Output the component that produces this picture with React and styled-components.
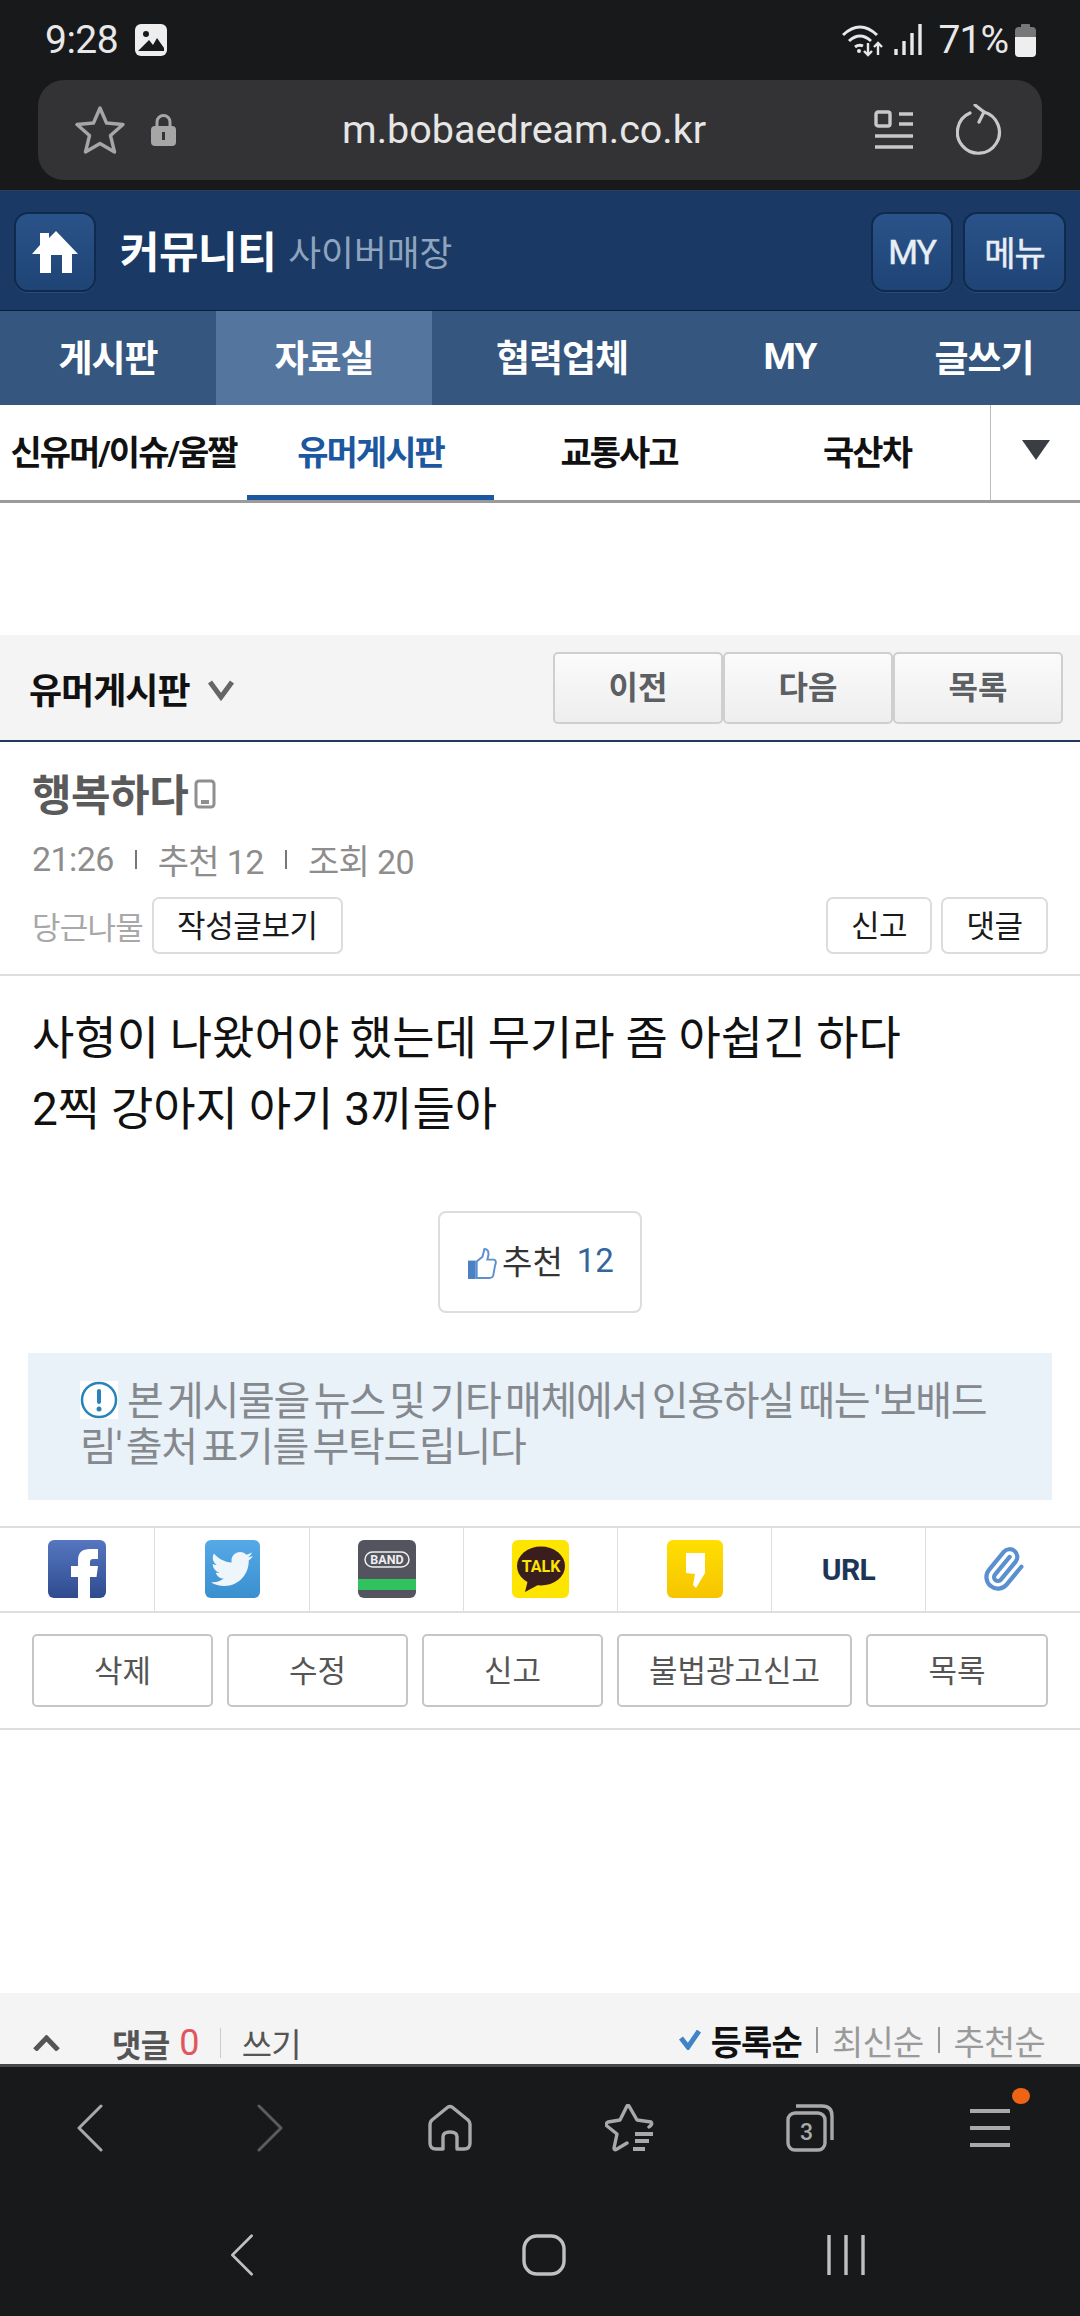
import React from 'react'
import styled, { createGlobalStyle } from 'styled-components'
import { FaTwitter } from 'react-icons/fa'
import { Paperclip } from 'lucide-react'

const FONT = `Roboto, "Noto Sans CJK KR", sans-serif`

const Global = createGlobalStyle`
  html, body { margin: 0; padding: 0; background: #fff; }
  body { font-family: ${FONT}; }
  * { box-sizing: border-box; }
`

const Page = styled.div`
  width: 1080px;
  height: 2316px;
  overflow: hidden;
  display: flex;
  flex-direction: column;
  background: #fff;
`

/* browser chrome */
const StatusBar = styled.div`
  height: 80px;
  background: #18191b;
  display: flex;
  align-items: center;
  padding: 0 44px 0 45px;
  color: #e8e8e8;
  font-size: 39px;
`
const StatusText = styled.span`
  letter-spacing: ${p => p.$ls || 0}px;
  margin-left: ${p => p.$ml || 0}px;
`
const Spacer = styled.div`
  flex: 1;
`
const UrlWrap = styled.div`
  height: 110px;
  background: #18191b;
  padding: 0 38px 10px;
`
const UrlBar = styled.div`
  height: 100px;
  border-radius: 26px;
  background: #333335;
  display: flex;
  align-items: center;
  padding: 0 40px 0 37px;
  position: relative;
`
const UrlText = styled.div`
  position: absolute;
  left: 304px;
  top: 28px;
  font-size: 39.5px;
  line-height: 44px;
  color: #e6e6e6;
`

/* site header */
const Header = styled.div`
  height: 120px;
  background: #1a3a65;
  border-top: 1px solid #2c3f58;
  display: flex;
  align-items: center;
  padding: 2px 14px 0;
`
const HeadBtn = styled.div`
  width: ${p => p.$w}px;
  height: 80px;
  margin-left: ${p => p.$ml || 0}px;
  border-radius: 14px;
  background: linear-gradient(#2a5389, #1f4476);
  border: 2px solid #102a4e;
  box-shadow: 0 1px 0 #2b4a75;
  display: flex;
  align-items: center;
  justify-content: center;
  color: #e9eef5;
  font-size: 34px;
  letter-spacing: -1px;
  -webkit-text-stroke: 0.5px #e9eef5;
`
const SiteTitle = styled.span`
  font-size: 43px;
  font-weight: 700;
  color: #fff;
  margin-left: 24px;
  margin-bottom: 6px;
  letter-spacing: -0.5px;
`
const SiteSub = styled.span`
  font-size: 35.7px;
  color: #8fa4bd;
  margin-left: 12px;
  margin-bottom: 3px;
`
const Nav = styled.div`
  height: 95px;
  border-top: 1px solid #0c1f3a;
  background: #35567f;
  display: grid;
  grid-template-columns: 216px 216px 260px 196px 192px;
`
const NavItem = styled.div`
  display: flex;
  align-items: center;
  justify-content: center;
  color: #fff;
  font-size: 37px;
  font-weight: 700;
  letter-spacing: -1px;
  padding-bottom: 4px;
  background: ${p => (p.$active ? '#54769e' : 'transparent')};
`
const SubNav = styled.div`
  height: 98px;
  border-bottom: 3px solid #9b9b9b;
  background: #fff;
  display: grid;
  grid-template-columns: 247px 247px 250px 246px 90px;
`
const SubItem = styled.div`
  display: flex;
  align-items: center;
  justify-content: center;
  font-size: 34px;
  font-weight: 700;
  letter-spacing: -2px;
  color: ${p => (p.$active ? '#1c58a0' : '#111')};
  border-bottom: ${p => (p.$active ? '5px solid #1c58a0' : '5px solid transparent')};
`
const SubArrow = styled.div`
  border-left: 1px solid #bbb;
  display: flex;
  align-items: center;
  justify-content: center;
  padding-bottom: 6px;
`
const Triangle = styled.div`
  width: 0;
  height: 0;
  border-left: 14px solid transparent;
  border-right: 14px solid transparent;
  border-top: 20px solid #3a3d42;
`
const AdGap = styled.div`
  height: 132px;
`

/* board bar */
const BoardBar = styled.div`
  height: 107px;
  background: #f4f4f4;
  border-bottom: 2px solid #22385a;
  display: flex;
  align-items: center;
  padding: 0 17px 0 29px;
`
const BoardName = styled.span`
  font-size: 36px;
  font-weight: 700;
  color: #111;
  letter-spacing: -1px;
`
const BoardChevron = styled.svg`
  width: 28px;
  height: 22px;
  margin-left: 17px;
  margin-top: 4px;
`
const PagerBtn = styled.div`
  width: 170px;
  height: 72px;
  padding-bottom: 5px;
  border: 2px solid #cfcfcf;
  border-radius: 5px;
  background: linear-gradient(#fbfbfb, #eeeeee);
  display: flex;
  align-items: center;
  justify-content: center;
  font-size: 32px;
  font-weight: 700;
  color: #5c5f63;
`

/* post head */
const PostHead = styled.div`
  height: 234px;
  border-bottom: 2px solid #dedede;
  padding: 25px 32px 0 32px;
`
const Author = styled.div`
  display: flex;
  align-items: center;
  height: 50px;
  font-size: 43px;
  font-weight: 700;
  color: #5a5a5a;
  letter-spacing: -0.5px;
`
const Meta = styled.div`
  display: flex;
  align-items: center;
  height: 48px;
  margin-top: 18px;
  font-size: 34px;
  color: #8d8d8d;
  letter-spacing: -0.6px;
`
const MetaSep = styled.span`
  width: 2px;
  height: 19px;
  background: #777;
  margin: 0 21px;
`
const ActionRow = styled.div`
  display: flex;
  align-items: center;
  margin-top: 14px;
`
const Nick = styled.span`
  font-size: 31px;
  color: #a8a8a8;
  letter-spacing: -0.8px;
  margin-right: 9px;
`
const SmallBtn = styled.div`
  width: ${p => p.$w}px;
  height: 57px;
  margin-left: ${p => p.$ml || 0}px;
  padding-bottom: 4px;
  border: 2px solid #dcdcdc;
  border-radius: 7px;
  display: flex;
  align-items: center;
  justify-content: center;
  font-size: 31px;
  color: #1a1a1a;
  letter-spacing: -0.4px;
`

/* post body */
const Body = styled.div`
  padding: 27px 32px 0;
  height: 235px;
  font-size: 46px;
  line-height: 71px;
  word-spacing: -0.6px;
  color: #111;
`
const LikeRow = styled.div`
  display: flex;
  justify-content: center;
`
const LikeBtn = styled.div`
  width: 204px;
  height: 102px;
  margin-right: 1px;
  border: 2px solid #dddddd;
  border-radius: 8px;
  display: flex;
  align-items: center;
  justify-content: center;
  font-size: 33px;
  color: #333;
  padding-bottom: 4px;
`
const LikeCount = styled.span`
  color: #33659f;
  margin-left: 14px;
`
const Notice = styled.div`
  margin: 40px 28px 0;
  height: 147px;
  padding: 26px 50px 0 52px;
  background: #e9f1f9;
  font-size: 40px;
  line-height: 46px;
  color: #85898e;
  letter-spacing: -1.3px;
  word-spacing: -4px;
  word-break: break-all;
`
const NoticeIcon = styled.svg`
  width: 38px;
  height: 38px;
  vertical-align: -4px;
  margin-right: 9px;
`

/* share row */
const ShareRow = styled.div`
  margin-top: 26px;
  height: 87px;
  border-top: 2px solid #dedede;
  border-bottom: 2px solid #dedede;
  display: grid;
  grid-template-columns: 155px 155px 154px 154px 154px 154px 154px;
`
const ShareCell = styled.div`
  display: flex;
  align-items: center;
  justify-content: center;
  border-right: ${p => (p.$last ? 'none' : '1px solid #dedede')};
  padding-bottom: 1px;
`
const ShareIcon = styled.div`
  width: ${p => p.$w || 58}px;
  height: 58px;
  border-radius: 6px;
  display: flex;
  align-items: center;
  justify-content: center;
  overflow: hidden;
  background: ${p => p.$bg};
  color: #fff;
`
const UrlLabel = styled.span`
  font-size: 30px;
  font-weight: 700;
  color: #1d3557;
  letter-spacing: -0.5px;
`
const ManageRow = styled.div`
  height: 117px;
  border-bottom: 2px solid #dedede;
  padding: 21px 32px 0;
  display: flex;
  justify-content: space-between;
`
const ManageBtn = styled.div`
  width: ${p => p.$w}px;
  height: 73px;
  padding-bottom: 5px;
  border: 2px solid #c6c6c6;
  border-radius: 5px;
  display: flex;
  align-items: center;
  justify-content: center;
  font-size: 31px;
  color: #555;
`
const BlankGap = styled.div`
  height: 263px;
`

/* comment bar, cut off by the browser toolbar */
const CommentBar = styled.div`
  height: 71px;
  background: #f4f4f4;
  overflow: hidden;
  display: flex;
  padding: 25px 35px 0 33px;
`
const CommentLeft = styled.div`
  display: flex;
  align-items: center;
  height: 50px;
  font-size: 33px;
  letter-spacing: -0.8px;
  color: #555;
`
const CommentLabel = styled.span`
  font-size: 32px;
  font-weight: 700;
  margin-left: 52px;
`
const CommentCount = styled.span`
  font-size: 36px;
  color: #e2555f;
  margin-left: 10px;
`
const CommentSep = styled.span`
  width: 1px;
  height: 30px;
  background: #ccc;
  margin: 0 21px;
`
const SortGroup = styled.div`
  display: flex;
  align-items: center;
  height: 44px;
  font-size: 34px;
  letter-spacing: -0.8px;
  color: #9a9a9a;
`
const SortActive = styled.span`
  font-weight: 700;
  color: #111;
  margin-left: 10px;
`
const SortSep = styled.span`
  width: 2px;
  height: 26px;
  background: #999;
  margin: 0 14px;
`

/* browser toolbar and system nav */
const BottomChrome = styled.div`
  flex: 1;
  border-top: 3px solid #47484a;
  background: #18191b;
  display: flex;
  flex-direction: column;
`
const Toolbar = styled.div`
  height: 116px;
  display: grid;
  grid-template-columns: repeat(6, 180px);
  align-items: center;
`
const ToolCell = styled.div`
  display: flex;
  justify-content: center;
  padding-top: 6px;
  position: relative;
`
const Dot = styled.span`
  position: absolute;
  width: 18px;
  height: 16px;
  border-radius: 50%;
  background: #ef6414;
  left: 112px;
  top: -14px;
`
const SysNav = styled.div`
  margin-top: 42px;
  padding-left: 91px;
  height: 60px;
  display: grid;
  grid-template-columns: repeat(3, 302px);
  align-items: center;
  justify-items: center;
`

const HomeGlyph = () => (
  <svg width="46" height="42" viewBox="0 0 46 42">
    <path fill="#fff" d="M24 0 L46 23 H40 V42 H30 V24 H19 V42 H8 V23 H0 L8 14 V2 H17 V7 Z" />
  </svg>
)

const Chevron = ({ dir = 'left', color = '#a9a9a9', h = 48, w = 26, sw = 3 }) => (
  <svg width={w} height={h} viewBox="0 0 26 48" fill="none" stroke={color} strokeWidth={sw} strokeLinecap="round" strokeLinejoin="round">
    <path d={dir === 'left' ? 'M24 2 L2 24 L24 46' : 'M2 2 L24 24 L2 46'} />
  </svg>
)

export default function App() {
  return (
    <Page>
      <Global />
      <StatusBar>
        <StatusText $ls={-0.5}>9:28</StatusText>
        <svg style={{ marginLeft: 17 }} width="32" height="32" viewBox="0 0 32 32">
          <rect x="0" y="0" width="32" height="32" rx="6" fill="#eee" />
          <circle cx="11" cy="10" r="3" fill="#18191b" />
          <path d="M3 27 L14 16 L18 21 L22 14 L29 24 V27 Z" fill="#18191b" />
        </svg>
        <Spacer />
        <svg width="80" height="34" viewBox="0 0 80 34" fill="none" stroke="#e8e8e8" strokeWidth="3">
          <path d="M1 12 Q18 -4 35 12" />
          <path d="M7 18 Q18 8 29 18" />
          <path d="M13 24 Q17 21 21 23" />
          <circle cx="17" cy="28" r="2" fill="#e8e8e8" stroke="none" />
          <path d="M26 20 V32 M22 28 L26 32 L30 28" strokeWidth="2.4" />
          <path d="M36 32 V20 M32 24 L36 20 L40 24" strokeWidth="2.4" />
          <path d="M54 32 V26 M62 32 V18 M70 32 V10 M78 32 V1" strokeWidth="3.4" />
        </svg>
        <StatusText $ml={17} $ls={-1}>71%</StatusText>
        <svg style={{ marginLeft: 7 }} width="21" height="33" viewBox="0 0 21 33">
          <rect x="6" y="0" width="9" height="5" rx="1" fill="#777" />
          <rect x="0" y="3" width="21" height="12" rx="4" fill="#777" />
          <path d="M0 13 H21 V29 Q21 33 17 33 H4 Q0 33 0 29 Z" fill="#eee" />
        </svg>
      </StatusBar>
      <UrlWrap>
        <UrlBar>
          <svg width="50" height="50" viewBox="0 0 50 50" fill="none" stroke="#a6a6a6" strokeWidth="3.4" strokeLinejoin="round">
            <path d="M25 3 L31.5 18 L48 19.5 L35.5 30.5 L39.5 47 L25 38.5 L10.5 47 L14.5 30.5 L2 19.5 L18.5 18 Z" />
          </svg>
          <svg style={{ marginLeft: 26 }} width="25" height="32" viewBox="0 0 25 32">
            <path d="M6 13 V8 a6.500 6.500 0 0 1 13 0 V13" fill="none" stroke="#a6a6a6" strokeWidth="3" />
            <rect x="0" y="12" width="25" height="20" rx="4" fill="#a6a6a6" />
            <rect x="11" y="18" width="3" height="8" fill="#333335" />
          </svg>
          <UrlText>m.bobaedream.co.kr</UrlText>
          <Spacer />
          <svg width="40" height="40" viewBox="0 0 40 40" fill="none" stroke="#c8c8c8" strokeWidth="3.4">
            <rect x="2" y="2" width="14" height="14" rx="2" />
            <path d="M25 4 H39 M25 14 H39 M1 26 H39 M1 37 H39" />
          </svg>
          <svg style={{ marginLeft: 42 }} width="46" height="52" viewBox="0 0 46 52" fill="none" stroke="#c8c8c8" strokeWidth="3.2" strokeLinecap="round">
            <path d="M28 8 A21 21 0 1 1 14 9" />
            <path d="M19 1 L28 8 L23 18" />
          </svg>
        </UrlBar>
      </UrlWrap>

      <Header>
        <HeadBtn $w={82}><HomeGlyph /></HeadBtn>
        <SiteTitle>커뮤니티</SiteTitle>
        <SiteSub>사이버매장</SiteSub>
        <Spacer />
        <HeadBtn $w={82}>MY</HeadBtn>
        <HeadBtn $w={103} $ml={10}>메뉴</HeadBtn>
      </Header>
      <Nav>
        <NavItem>게시판</NavItem>
        <NavItem $active>자료실</NavItem>
        <NavItem>협력업체</NavItem>
        <NavItem>MY</NavItem>
        <NavItem>글쓰기</NavItem>
      </Nav>
      <SubNav>
        <SubItem>신유머/이슈/움짤</SubItem>
        <SubItem $active>유머게시판</SubItem>
        <SubItem>교통사고</SubItem>
        <SubItem>국산차</SubItem>
        <SubArrow><Triangle /></SubArrow>
      </SubNav>
      <AdGap />

      <BoardBar>
        <BoardName>유머게시판</BoardName>
        <BoardChevron viewBox="0 0 28 22" fill="none" stroke="#666" strokeWidth="5">
          <path d="M3 3 L14 18 L25 3" />
        </BoardChevron>
        <Spacer />
        <PagerBtn>이전</PagerBtn>
        <PagerBtn>다음</PagerBtn>
        <PagerBtn>목록</PagerBtn>
      </BoardBar>

      <PostHead>
        <Author>
          행복하다
          <svg style={{ marginLeft: 6, marginTop: 3 }} width="22" height="30" viewBox="0 0 22 30" fill="none">
            <rect x="2" y="2" width="18" height="26" rx="3" stroke="#8f8f8f" strokeWidth="3" />
            <rect x="7" y="21" width="8" height="4" fill="#8f8f8f" />
          </svg>
        </Author>
        <Meta>
          21:26
          <MetaSep />
          추천 12
          <MetaSep />
          조회 20
        </Meta>
        <ActionRow>
          <Nick>당근나물</Nick>
          <SmallBtn $w={191}>작성글보기</SmallBtn>
          <Spacer />
          <SmallBtn $w={106}>신고</SmallBtn>
          <SmallBtn $w={107} $ml={9}>댓글</SmallBtn>
        </ActionRow>
      </PostHead>

      <Body>
        사형이 나왔어야 했는데 무기라 좀 아쉽긴 하다<br />
        2찍 강아지 아기 3끼들아
      </Body>
      <LikeRow>
        <LikeBtn>
          <svg style={{ marginRight: 5, marginLeft: 3, marginTop: 6 }} width="29" height="31" viewBox="0 0 30 32">
            <rect x="0" y="13" width="8" height="19" fill="#4a80c4" />
            <path d="M9 14 L15 9 L17 1 Q22 1 21 8 L20 12 H27 Q30 13 28 18 L26 29 Q25 31 22 31 H9 Z" fill="#fff" stroke="#5b8fce" strokeWidth="2" />
          </svg>
          추천<LikeCount>12</LikeCount>
        </LikeBtn>
      </LikeRow>
      <Notice>
        <NoticeIcon viewBox="0 0 38 38">
          <rect width="38" height="38" fill="#fff" />
          <circle cx="19" cy="19" r="17" fill="#fff" stroke="#2a83b8" strokeWidth="2.5" />
          <rect x="17" y="8" width="4" height="15" rx="2" fill="#2a83b8" />
          <circle cx="19" cy="28" r="2.500" fill="#2a83b8" />
        </NoticeIcon>
        본 게시물을 뉴스 및 기타 매체에서 인용하실 때는 '보배드림' 출처 표기를 부탁드립니다
      </Notice>

      <ShareRow>
        <ShareCell>
          <ShareIcon $bg="linear-gradient(#5577c0, #2f4b8f)">
            <svg width="58" height="58" viewBox="0 0 58 58">
              <path fill="#fff" d="M30 58 V37 H23 V26 H30 V20 Q30 9 42 9 H50 V19 H45 Q42 19 42 22 V26 H50 L48.500 37 H42 V58 Z" />
            </svg>
          </ShareIcon>
        </ShareCell>
        <ShareCell>
          <ShareIcon $w={55} $bg="linear-gradient(#55a9e6, #3a8fcf)">
            <FaTwitter size={42} color="#eef6fc" />
          </ShareIcon>
        </ShareCell>
        <ShareCell>
          <ShareIcon $bg="#53545e">
            <svg width="58" height="58" viewBox="0 0 58 58">
              <rect x="7" y="12" width="44" height="15" rx="7.500" fill="none" stroke="#eee" strokeWidth="1.500" />
              <text x="29" y="24" textAnchor="middle" fontSize="12.500" fontWeight="700" fill="#eee" fontFamily="Roboto">BAND</text>
              <rect x="0" y="39" width="58" height="11" fill="#2fc25f" />
            </svg>
          </ShareIcon>
        </ShareCell>
        <ShareCell>
          <ShareIcon $w={57} $bg="#fde500">
            <svg width="57" height="58" viewBox="0 0 57 58">
              <ellipse cx="29" cy="26" rx="24" ry="19.500" fill="#3a1d1d" />
              <path d="M16 40 L13 52 L26 45 Z" fill="#3a1d1d" />
              <text x="29" y="32" textAnchor="middle" fontSize="16" fontWeight="700" fill="#fde500" fontFamily="Roboto">TALK</text>
            </svg>
          </ShareIcon>
        </ShareCell>
        <ShareCell>
          <ShareIcon $w={56} $bg="linear-gradient(#ffdf00, #f6c400)">
            <svg width="56" height="58" viewBox="0 0 56 58">
              <path d="M19 13 H38 V33 L29 48 L26 45 L28 34 L19 33 Z" fill="#fff" />
            </svg>
          </ShareIcon>
        </ShareCell>
        <ShareCell><UrlLabel>URL</UrlLabel></ShareCell>
        <ShareCell $last>
          <Paperclip size={46} color="#5a90d0" strokeWidth={2.2} style={{ transform: 'rotate(-5deg)' }} />
        </ShareCell>
      </ShareRow>
      <ManageRow>
        <ManageBtn $w={181}>삭제</ManageBtn>
        <ManageBtn $w={181}>수정</ManageBtn>
        <ManageBtn $w={181}>신고</ManageBtn>
        <ManageBtn $w={235}>불법광고신고</ManageBtn>
        <ManageBtn $w={182}>목록</ManageBtn>
      </ManageRow>
      <BlankGap />

      <CommentBar>
        <CommentLeft>
          <svg width="27" height="16" viewBox="0 0 27 16" fill="none" stroke="#555" strokeWidth="5">
            <path d="M2 15 L13.500 3 L25 15" />
          </svg>
          <CommentLabel>댓글</CommentLabel>
          <CommentCount>0</CommentCount>
          <CommentSep />
          쓰기
        </CommentLeft>
        <Spacer />
        <SortGroup>
          <svg width="22" height="20" viewBox="0 0 22 20" fill="none" stroke="#3f83c9" strokeWidth="5">
            <path d="M2 8 L9 17 L20 1" />
          </svg>
          <SortActive>등록순</SortActive>
          <SortSep />
          최신순
          <SortSep />
          추천순
        </SortGroup>
      </CommentBar>

      <BottomChrome>
        <Toolbar>
          <ToolCell><Chevron /></ToolCell>
          <ToolCell><Chevron dir="right" color="#5c5c5c" /></ToolCell>
          <ToolCell>
            <svg width="44" height="48" viewBox="0 0 44 46" fill="none" stroke="#a9a9a9" strokeWidth="3.400" strokeLinejoin="round">
              <path d="M15 44 H8 Q2 44 2 38 V19 Q2 17 4 15 L20 2 Q22 1 24 2 L40 15 Q42 17 42 19 V38 Q42 44 36 44 H29 V32 Q29 27 22 27 Q15 27 15 32 Z" />
            </svg>
          </ToolCell>
          <ToolCell>
            <svg width="50" height="48" viewBox="0 0 50 48" fill="none" stroke="#a9a9a9" strokeWidth="3.400" strokeLinejoin="round" strokeLinecap="round">
              <path d="M44 23 Q48 20 46 18 L32 16 L24 2 Q23 1 22 2 L15 16 L3 18 Q0 20 2 22 L12 30 L9 44 Q9 47 12 45 L22 39" />
              <path d="M30 30 H48 M30 37 H44 M28 45 H40" strokeWidth="3.800" strokeLinecap="butt" />
            </svg>
          </ToolCell>
          <ToolCell>
            <svg width="48" height="48" viewBox="0 0 48 48" fill="none" stroke="#a9a9a9" strokeWidth="3.400">
              <rect x="2" y="9" width="37" height="37" rx="7" />
              <path d="M10 2 H36 Q46 2 46 12 V36" />
              <text x="20.500" y="36" textAnchor="middle" fontSize="23" fontWeight="500" fill="#a9a9a9" stroke="none" fontFamily="Roboto">3</text>
            </svg>
          </ToolCell>
          <ToolCell>
            <svg width="42" height="40" viewBox="0 0 42 40" fill="none" stroke="#a9a9a9" strokeWidth="4">
              <path d="M1 3 H41 M1 20 H41 M1 37 H41" />
            </svg>
            <Dot />
          </ToolCell>
        </Toolbar>
        <SysNav>
          <Chevron color="#c0c0c0" w={24} h={42} sw={3} />
          <svg width="44" height="42" viewBox="0 0 44 42" fill="none" stroke="#c0c0c0" strokeWidth="3.400">
            <rect x="2" y="2" width="40" height="38" rx="13" />
          </svg>
          <svg width="38" height="42" viewBox="0 0 38 42" fill="none" stroke="#c0c0c0" strokeWidth="3.400">
            <path d="M2 1 V41 M19 1 V41 M36 1 V41" />
          </svg>
        </SysNav>
      </BottomChrome>
    </Page>
  )
}
